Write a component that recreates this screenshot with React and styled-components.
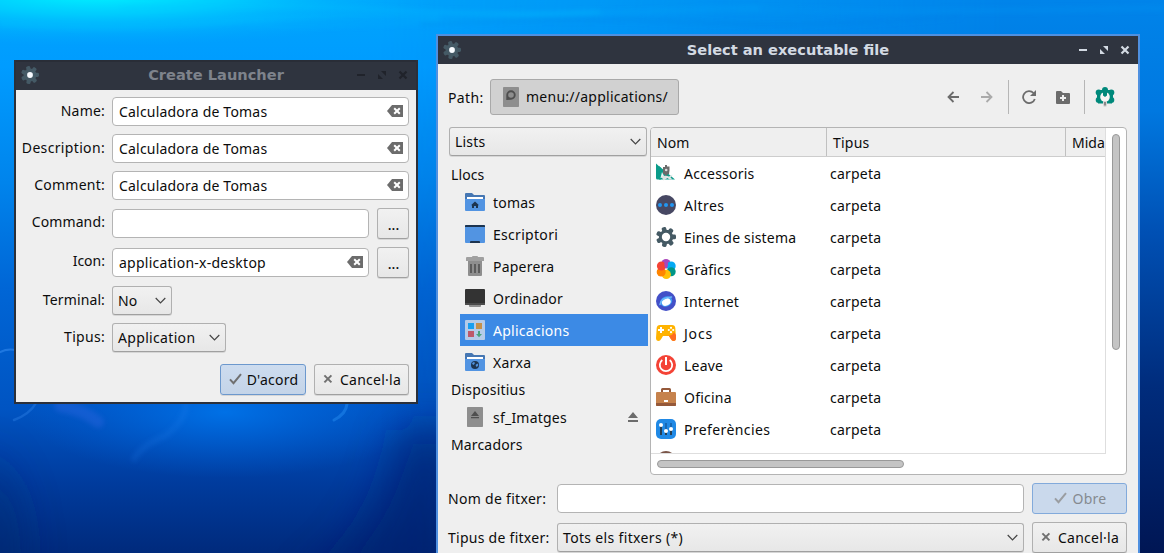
import React from "react";
import styled, { createGlobalStyle, css } from "styled-components";

const GlobalStyle = createGlobalStyle`
  *, *::before, *::after { box-sizing: border-box; }
  html, body { margin: 0; padding: 0; overflow: hidden; }
  body { font-family: "Noto Sans", "Open Sans", sans-serif; font-size: 14px; color: #0c0c0c; }
  svg { display: block; flex: none; }
  button, input { font: inherit; color: inherit; margin: 0; }
`;

/* ---------- desktop ---------- */

const Desktop = styled.main`
  position: relative;
  width: 1164px;
  height: 553px;
  overflow: hidden;
  background: #0058c4;
`;

const WallpaperSvg = styled.svg`
  position: absolute;
  inset: 0;
`;

const Wallpaper = () => (
  <WallpaperSvg width="1164" height="553" viewBox="0 0 1164 553">
    <defs>
      <linearGradient id="sea" x1="0" y1="0" x2="0" y2="1">
        <stop offset="0" stopColor="#00a4fc" />
        <stop offset="0.12" stopColor="#009cff" />
        <stop offset="0.33" stopColor="#0084ec" />
        <stop offset="0.52" stopColor="#0066d6" />
        <stop offset="0.74" stopColor="#0054c2" />
        <stop offset="0.87" stopColor="#003c9e" />
        <stop offset="1" stopColor="#002a7c" />
      </linearGradient>
      <radialGradient id="sun" cx="0.5" cy="0.5" r="0.5">
        <stop offset="0" stopColor="#00f4ff" />
        <stop offset="0.4" stopColor="#00dcff" stopOpacity="0.7" />
        <stop offset="1" stopColor="#00b0ff" stopOpacity="0" />
      </radialGradient>
      <radialGradient id="glow" cx="0.5" cy="0.5" r="0.5">
        <stop offset="0" stopColor="#0074ea" stopOpacity="0.9" />
        <stop offset="1" stopColor="#0060d8" stopOpacity="0" />
      </radialGradient>
      <linearGradient id="deepRight" x1="0" y1="0" x2="0" y2="1">
        <stop offset="0" stopColor="#0084ea" />
        <stop offset="0.2" stopColor="#0078e0" />
        <stop offset="0.42" stopColor="#0050b4" />
        <stop offset="0.7" stopColor="#002c7c" />
        <stop offset="1" stopColor="#001654" />
      </linearGradient>
      <linearGradient id="fadeRight" x1="0" y1="0" x2="1" y2="0">
        <stop offset="0" stopColor="#fff" stopOpacity="0" />
        <stop offset="0.8" stopColor="#fff" stopOpacity="1" />
      </linearGradient>
      <mask id="rightMask">
        <rect x="380" width="784" height="553" fill="url(#fadeRight)" />
      </mask>
      <filter id="soft" x="-30%" y="-100%" width="160%" height="300%">
        <feGaussianBlur stdDeviation="2.5" />
      </filter>
      <filter id="softer" x="-60%" y="-60%" width="220%" height="220%">
        <feGaussianBlur stdDeviation="20" />
      </filter>
    </defs>
    <rect width="1164" height="553" fill="url(#sea)" />
    <rect x="380" width="784" height="553" fill="url(#deepRight)" mask="url(#rightMask)" />
    <ellipse cx="95" cy="-6" rx="350" ry="52" fill="url(#sun)" />
    <ellipse cx="225" cy="412" rx="200" ry="66" fill="url(#glow)" />
    <g filter="url(#softer)">
      <path d="M400 430 H460 V590 H300 Q380 540 400 430Z" fill="#00226c" opacity="0.6" />
      <path d="M-20 450 Q30 490 20 590 H-20Z" fill="#00276c" opacity="0.5" />
    </g>
    <g fill="none" filter="url(#soft)">
      <path d="M0 24 Q120 32 230 22 T440 18" stroke="#00e4ff" strokeWidth="2" opacity="0.22" />
      <path d="M120 8 Q280 4 390 10 T600 12" stroke="#00c8ff" strokeWidth="3" opacity="0.4" />
      <path d="M250 26 Q330 28 460 20 T760 8" stroke="#18b4ff" strokeWidth="2" opacity="0.4" />
      <path d="M420 24 Q560 16 690 22 T960 16" stroke="#0078e0" strokeWidth="3" opacity="0.25" />
      <path d="M700 8 Q860 14 1164 8" stroke="#009cf4" strokeWidth="3" opacity="0.4" />
    </g>
    <g fill="none" strokeLinecap="round">
      <path d="M-3 354 Q5 348 16 350" stroke="#4aa0ff" strokeWidth="2" opacity="0.4" />
      <path d="M14 420 Q30 414 36 403" stroke="#4aa0ff" strokeWidth="2.5" opacity="0.25" />
      <path d="M347 404 Q346 414 334 420" stroke="#35a0ff" strokeWidth="3" opacity="0.35" />
      <path d="M186 404 Q186 420 165 436 Q142 445 134 459" stroke="#2a88f4" strokeWidth="6" opacity="0.18" filter="url(#soft)" />
      <path d="M60 406 Q84 410 98 422" stroke="#6878ff" strokeWidth="12" opacity="0.18" filter="url(#soft)" />
    </g>
  </WallpaperSvg>
);

/* ---------- window chrome ---------- */

const Window = styled.section`
  position: absolute;
  left: ${(p) => p.$x}px;
  top: ${(p) => p.$y}px;
  width: ${(p) => p.$w}px;
  height: ${(p) => p.$h}px;
  display: flex;
  flex-direction: column;
  background: #efefef;
  border: 2px solid ${(p) => (p.$active ? "#4f90e0" : "#2b303a")};
  ${(p) => !p.$active && css`border-top-width: 0;`}
`;

const TitleBar = styled.header`
  flex: none;
  display: grid;
  grid-template-columns: 60px 1fr 58px;
  align-items: center;
  height: ${(p) => (p.$active ? 28 : 30)}px;
  padding: 0 7px 0 5px;
  background: #2f343f;
  box-shadow: ${(p) => (p.$active ? "none" : "inset 0 2px #292d37")};
`;

const Title = styled.h1`
  margin: 0;
  text-align: center;
  white-space: nowrap;
  font: bold 14.6px/18px "DejaVu Sans", sans-serif;
  color: ${(p) => (p.$active ? "#d3dae3" : "#7e838c")};
`;

const WindowButtons = styled.div`
  display: flex;
  justify-content: flex-end;
  gap: 9px;
  color: ${(p) => (p.$active ? "#d3dae3" : "#20232b")};
`;

const WindowControls = ({ $active }) => (
  <WindowButtons $active={$active}>
    <svg width="12" height="12" viewBox="0 0 12 12"><path d="M2 6h8" stroke="currentColor" strokeWidth="2" /></svg>
    <svg width="12" height="12" viewBox="0 0 12 12"><path d="M5 2h5v5zM2 5v5h5z" fill="currentColor" /></svg>
    <svg width="12" height="12" viewBox="0 0 12 12"><path d="M2.500 2.500l7 7m0-7l-7 7" stroke="currentColor" strokeWidth="2.200" /></svg>
  </WindowButtons>
);

const Gear = ({ size = 20, color = "#455a64", hole = "#fff", r = 4.2 }) => (
  <svg width={size} height={size} viewBox="0 0 20 20">
    <g fill={color}>
      <circle cx="10" cy="10" r="7.2" />
      {[0, 1, 2, 3, 4, 5, 6].map((i) => (
        <rect key={i} x="7.7" y="0" width="4.600" height="6" rx="1.5" transform={`rotate(${-14 + (i * 360) / 7} 10 10)`} />
      ))}
    </g>
    <circle cx="10" cy="10" r={r} fill={hole} />
  </svg>
);

const AppGear = () => <Gear size={18} hole="#f8fbff" r={3.2} color="#455a66" />;

/* ---------- controls ---------- */

const raised = css`
  border: 1px solid #b0b0b0;
  border-bottom-color: #a0a0a0;
  border-radius: 3px;
  background: linear-gradient(#f1f1f1, #e7e7e7);
  box-shadow: 0 1px 0 rgba(0, 0, 0, 0.1);
`;

const Text = styled.span`
  display: block;
  white-space: nowrap;
  line-height: 20px;
  letter-spacing: ${(p) => p.$ls ?? 0.22}px;
`;

const FieldBox = styled.div`
  display: flex;
  align-items: center;
  justify-content: space-between;
  flex: ${(p) => (p.$w ? "none" : 1)};
  width: ${(p) => (p.$w ? `${p.$w}px` : "auto")};
  height: 29px;
  padding: 0 5px 0 6px;
  background: #fff;
  border: 1px solid #b4b4b4;
  border-radius: 4px;

  svg { margin-bottom: 1px; }
`;

const Select = styled.button`
  ${raised}
  display: flex;
  align-items: center;
  justify-content: space-between;
  flex: none;
  width: ${(p) => p.$w}px;
  height: 29px;
  padding: 0 5px;

  svg { margin-top: 1px; }
`;

const Button = styled.button`
  ${raised}
  display: flex;
  align-items: center;
  justify-content: center;
  gap: ${(p) => p.$gap || 5}px;
  flex: none;
  width: ${(p) => p.$w}px;
  height: 31px;
  padding: 0 0 0 1px;

  svg { margin-bottom: 1px; }

  ${(p) => p.$primary && css`
    background: linear-gradient(#cddcef, #c4d4e8);
    border-color: #6c98cd;
  `}
  ${(p) => p.$disabled && css`
    background: #cad9ec;
    border-color: #82aadb;
    box-shadow: none;
    color: #858a90;
  `}
`;

const Chevron = () => (
  <svg width="11" height="8" viewBox="0 0 11 8"><path d="M.7 1l4.800 4.800L10.300 1" fill="none" stroke="#444" strokeWidth="1.200" /></svg>
);

const ClearIcon = () => (
  <svg width="16" height="12" viewBox="0 0 16 12">
    <path d="M5 0H16V12H5L0 6Z" fill="#6c6c6c" />
    <path d="M7.200 3.200l5.600 5.600m0-5.600L7.200 8.800" stroke="#fff" strokeWidth="2" />
  </svg>
);

const CheckIcon = ({ color = "#707070" }) => (
  <svg width="13" height="12" viewBox="0 0 13 12"><path d="M1 6.400l3.500 3.800L12 1.200" fill="none" stroke={color} strokeWidth="2" /></svg>
);

const CrossIcon = () => (
  <svg width="10" height="10" viewBox="0 0 10 10"><path d="M1.400 1.400l7 7m0-7l-7 7" stroke="#707070" strokeWidth="2" /></svg>
);

/* ---------- launcher window ---------- */

const Form = styled.div`
  display: flex;
  flex-direction: column;
  gap: 8px;
  padding: 7px 7px 0 0;
`;

const FormRow = styled.div`
  display: flex;
  align-items: center;
  height: ${(p) => p.$h || 29}px;
`;

const FormLabel = styled(Text)`
  display: flex;
  justify-content: flex-end;
  width: 89px;
  margin-right: 7px;
  padding-bottom: ${(p) => p.$raise || 2}px;
`;

const Dots = styled(Button)`
  margin-left: 8px;
  padding-top: 1px;
  font-weight: 500;
`;

const FormActions = styled.div`
  display: flex;
  justify-content: flex-end;
  gap: 8px;
  padding-top: 4px;
`;

const textRows = [
  { label: "Name:", ls: 0.2 },
  { label: "Description:", ls: 0.34 },
  { label: "Comment:", ls: 0.25 },
];

const LauncherWindow = () => (
  <Window $x={14} $y={60} $w={404} $h={344}>
    <TitleBar>
      <AppGear />
      <Title>Create Launcher</Title>
      <WindowControls />
    </TitleBar>
    <Form>
      {textRows.map((row) => (
        <FormRow key={row.label}>
          <FormLabel $ls={row.ls}>{row.label}</FormLabel>
          <FieldBox><Text $ls={0.2}>Calculadora de Tomas</Text><ClearIcon /></FieldBox>
        </FormRow>
      ))}
      <FormRow $h={31}>
        <FormLabel $raise={4} $ls={0.12}>Command:</FormLabel>
        <FieldBox />
        <Dots $w={32}>...</Dots>
      </FormRow>
      <FormRow $h={31}>
        <FormLabel $raise={4} $ls={0}>Icon:</FormLabel>
        <FieldBox><Text $ls={0.24}>application-x-desktop</Text><ClearIcon /></FieldBox>
        <Dots $w={32}>...</Dots>
      </FormRow>
      <FormRow>
        <FormLabel $ls={0.12}>Terminal:</FormLabel>
        <Select $w={60}><Text $ls={0}>No</Text><Chevron /></Select>
      </FormRow>
      <FormRow>
        <FormLabel $ls={0.3}>Tipus:</FormLabel>
        <Select $w={114}><Text $ls={0.33}>Application</Text><Chevron /></Select>
      </FormRow>
      <FormActions>
        <Button $w={86} $primary><CheckIcon /><Text $ls={0.25}>D'acord</Text></Button>
        <Button $w={95} $gap={7}><CrossIcon /><Text $ls={0.25}>Cancel·la</Text></Button>
      </FormActions>
    </Form>
  </Window>
);

/* ---------- place icons ---------- */

const FolderIcon = ({ children }) => (
  <svg width="20" height="18" viewBox="0 0 20 18">
    <path d="M0 1Q0 0 1 0H7L9 2H19Q20 2 20 3V9H0Z" fill="#4677b3" />
    <rect x="2" y="4" width="16" height="4" fill="#fff" />
    <path d="M0 6H20V17Q20 18 19 18H1Q0 18 0 17Z" fill="#5294e2" />
    {children}
  </svg>
);

const HomeFolderIcon = () => (
  <FolderIcon><path d="M10 8.500l4 3.700h-1V15h-2v-2H9v2H7v-2.800H6z" fill="#1d344f" /></FolderIcon>
);

const NetworkFolderIcon = () => (
  <FolderIcon>
    <circle cx="10" cy="12" r="4" fill="#1d344f" />
    <path d="M7 10l2-1 1 1-1 1.500-1 .5zM10.500 12l2-1.400.9 1.400-1.600 2.200z" fill="#5294e2" />
  </FolderIcon>
);

const DesktopIcon = () => (
  <svg width="20" height="18" viewBox="0 0 20 18">
    <rect width="20" height="18" rx="1" fill="#5294e2" />
    <path d="M0 2V1Q0 0 1 0H19Q20 0 20 1V2ZM5 18V17Q5 16 6 16H14Q15 16 15 17V18Z" fill="#1d344f" />
  </svg>
);

const TrashIcon = () => (
  <svg width="20" height="20" viewBox="0 0 20 20">
    <path d="M3 5H17V19Q17 20 16 20H4Q3 20 3 19Z" fill="#8e8e8e" />
    <path d="M7 1Q7 0 8 0H12Q13 0 13 1H18Q19 1 19 2V5H1V2Q1 1 2 1Z" fill="#a0a0a0" />
    <path d="M6 8v9M10 8v9M14 8v9" stroke="#5c5c5c" strokeWidth="2" />
  </svg>
);

const ComputerIcon = () => (
  <svg width="20" height="18" viewBox="0 0 20 18">
    <rect width="20" height="16" rx="1" fill="#333" />
    <path d="M0 14H20V15Q20 16 19 16H1Q0 16 0 15Z" fill="#4b4b4b" />
    <path d="M4 16H16V17Q16 18 15 18H5Q4 18 4 17Z" fill="#8e8e8e" />
  </svg>
);

const AppsIcon = () => (
  <svg width="20" height="20" viewBox="0 0 20 20">
    <rect width="20" height="20" rx="1" fill="#b4cbe9" />
    <rect x="3" y="3" width="6" height="6" fill="#189ff0" />
    <rect x="11" y="3" width="6" height="6" fill="#c4914c" />
    <rect x="3" y="11" width="6" height="6" fill="#bd596a" />
    <path d="M13 11h2v3h2l-3 3.200-3-3.200h2z" fill="#4aa27c" />
  </svg>
);

const DriveIcon = ({ children }) => (
  <svg width="20" height="20" viewBox="0 0 20 20">
    <rect x="2" width="16" height="20" rx="0.8" fill="#8e8e8e" />
    {children}
  </svg>
);

const MountIcon = () => (
  <DriveIcon><path d="M10 4l4 5H6zM6 10h8v1.200H6z" fill="#4f4f4f" /></DriveIcon>
);

const PathDriveIcon = () => (
  <DriveIcon>
    <path d="M5.300 13V8a4.700 4.700 0 1 1 4.700 4.700Z" fill="#4f4f4f" />
    <circle cx="10" cy="8" r="2.8" fill="#8e8e8e" />
  </DriveIcon>
);

const EjectIcon = () => (
  <svg width="10" height="10" viewBox="0 0 10 10"><path d="M5 0l5 6H0zM0 8h10v2H0z" fill="#6c6c6c" /></svg>
);

/* ---------- category icons ---------- */

const AccessoriesIcon = () => (
  <svg width="20" height="20" viewBox="0 0 20 20">
    <path d="M0 .5L5 5V16.500H1.500Q0 16.500 0 15Z" fill="#0b9c8a" />
    <path d="M3 3L19 16.500H3Z" fill="#0b9c8a" />
    <path d="M4.500 15l1.500-6 2.500 5z" fill="#eef4f3" />
    <path d="M9 2h2v1.500h2.500V7.500L13 11h-1.500v1.500h-3V11H7V4h2z" fill="#6b6b6b" />
    <circle cx="10.2" cy="7" r="1.3" fill="#ddd" />
    <path d="M5 13.500q5-1.500 8 0l4-2-2.500 3 2 2h-3l-2-1.500-4 2.500-1-2z" fill="#dfe3e3" />
  </svg>
);

const OthersIcon = () => (
  <svg width="20" height="20" viewBox="0 0 20 20">
    <circle cx="10" cy="10" r="10" fill="#474863" />
    <g fill="#2196f3"><circle cx="4" cy="10" r="2" /><circle cx="10" cy="10" r="2" /><circle cx="16" cy="10" r="2" /></g>
  </svg>
);

const GraphicsIcon = () => (
  <svg width="20" height="20" viewBox="0 0 20 20">
    <circle cx="10" cy="4.6" r="4.6" fill="#ab47bc" />
    <circle cx="15.2" cy="7" r="4.5" fill="#03a9f4" />
    <circle cx="15.2" cy="12.8" r="4.5" fill="#009688" />
    <circle cx="10.3" cy="15.4" r="4.6" fill="#ffc107" />
    <circle cx="5.2" cy="13" r="4.5" fill="#ff8500" />
    <circle cx="5.4" cy="7" r="4.5" fill="#f44336" />
    <path d="M10 10Q6.500 5 10 1.500Q14 6 10 10Z" fill="#ab47bc" />
  </svg>
);

const InternetIcon = () => (
  <svg width="20" height="20" viewBox="0 0 20 20">
    <circle cx="10" cy="10" r="10" fill="#4350c8" />
    <ellipse cx="10" cy="10.500" rx="6.200" ry="5" fill="#3f9cf5" transform="rotate(-25 10 10)" />
    <ellipse cx="10.200" cy="11.200" rx="4.600" ry="3.400" fill="#fff" transform="rotate(-25 10 11)" />
    <path d="M4 13.500Q5 6.500 15.500 6" fill="none" stroke="#6cb8fa" strokeWidth="1.600" strokeLinecap="round" />
  </svg>
);

const GamesIcon = () => (
  <svg width="20" height="18" viewBox="0 0 20 18">
    <path d="M4 1H16Q19 1 19.300 4L20 14Q20 17 17.500 17Q16 17 14.500 14.500L13 12H7L5.500 14.500Q4 17 2.500 17Q0 17 0 14L.7 4Q1 1 4 1Z" fill="#ffb300" />
    <path d="M20 11V14Q20 17 17.500 17Q16 17 14.500 14.500L13 12H10Q17 12 18 8Z" fill="#ff6d22" />
    <path d="M5 3v6M2 6h6" stroke="#fff" strokeWidth="2" />
    <g fill="#fff"><circle cx="15" cy="3.800" r="1.100" /><circle cx="15" cy="8.200" r="1.100" /><circle cx="12.800" cy="6" r="1.100" /><circle cx="17.200" cy="6" r="1.100" /></g>
  </svg>
);

const LeaveIcon = () => (
  <svg width="20" height="20" viewBox="0 0 20 20">
    <circle cx="10" cy="10" r="10" fill="#f44336" />
    <path d="M6.300 5A6.200 6.200 0 1 0 13.700 5" fill="none" stroke="#fff" strokeWidth="1.800" />
    <path d="M10 2v8" stroke="#fff" strokeWidth="2" />
  </svg>
);

const OfficeIcon = () => (
  <svg width="20" height="20" viewBox="0 0 20 20">
    <path d="M6 5V2.500Q6 2 6.500 2H13.500Q14 2 14 2.500V5" fill="none" stroke="#95593a" strokeWidth="2" />
    <rect y="5" width="20" height="14" rx="1" fill="#c6824c" />
    <path d="M0 16H20V18Q20 19 19 19H1Q0 19 0 18Z" fill="#95593a" />
    <rect x="8" y="13" width="4" height="2" fill="#fff" />
  </svg>
);

const PreferencesIcon = () => (
  <svg width="20" height="20" viewBox="0 0 20 20">
    <rect width="20" height="20" rx="5" fill="#2089e5" />
    <path d="M5 6v10M10 12v4M15 10v6" stroke="#263f55" strokeWidth="2" />
    <path d="M10 4v7M15 4v5" stroke="#1768b5" strokeWidth="2" />
    <g fill="#fff"><circle cx="5" cy="6" r="2" /><circle cx="10" cy="12" r="2" /><circle cx="15" cy="10" r="2" /></g>
  </svg>
);

const BrownIcon = () => (
  <svg width="20" height="20" viewBox="0 0 20 20"><circle cx="10" cy="10" r="10" fill="#7a5548" /></svg>
);

/* ---------- file dialog ---------- */

const DialogBody = styled.div`
  display: flex;
  flex-direction: column;
  padding: 15px 11px 0 10px;
`;

const PathRow = styled.div`
  display: flex;
  align-items: center;
  height: 36px;
`;

const PathLabel = styled(Text)`
  width: 42px;
  padding-top: 1px;
`;

const PathButton = styled.button`
  display: flex;
  align-items: center;
  gap: 5px;
  flex: none;
  width: 189px;
  height: 36px;
  padding: 0 0 0 10px;
  background: #d1d1d1;
  border: 1px solid #a9a9a9;
  border-radius: 3px;
`;

const Toolbar = styled.div`
  display: flex;
  align-items: center;
  padding-left: 268px;
`;

const Tool = styled.div`
  flex: none;
  margin-left: ${(p) => p.$before || 0}px;
`;

const Separator = styled.div`
  flex: none;
  width: 1px;
  height: 34px;
  margin-left: ${(p) => p.$before}px;
  background: #b6b6b6;
`;

const Panes = styled.div`
  display: flex;
  gap: 2px;
  height: 348px;
  margin-top: 12px;
`;

const Sidebar = styled.nav`
  display: flex;
  flex-direction: column;
  width: 200px;
  padding-left: 1px;
`;

const PlaceList = styled.div`
  display: flex;
  flex-direction: column;
  padding-top: 7px;
`;

const PlaceHeader = styled(Text)`
  height: 23px;
  line-height: 23px;
  padding-left: 2px;
`;

const PlaceRow = styled.div`
  display: flex;
  align-items: center;
  gap: 8px;
  height: 32px;
  margin-left: 11px;
  padding: 0 10px 0 5px;
  color: ${(p) => (p.$selected ? "#fff" : "inherit")};
  background: ${(p) => (p.$selected ? "#3c8ae5" : "transparent")};
`;

const PlaceName = styled(Text)`
  flex: 1;
  padding-top: 2px;
`;

const FileView = styled.div`
  display: flex;
  flex-direction: column;
  width: 477px;
  background: #fff;
  border: 1px solid #b4b4b4;
  border-radius: 4px;
  overflow: hidden;
`;

const ViewMain = styled.div`
  display: flex;
  height: 326px;
`;

const Viewport = styled.div`
  width: 455px;
  overflow: hidden;
  border-right: 1px solid #dedede;
  border-bottom: 1px solid #dedede;
`;

const HeaderRow = styled.div`
  display: flex;
  width: 540px;
  height: 29px;
  background: #efefef;
  border-bottom: 1px solid #cdcdcd;
`;

const HeaderCell = styled.div`
  display: flex;
  align-items: center;
  width: ${(p) => p.$w}px;
  padding: 2px 0 0 6px;
  border-right: 1px solid #c0c0c0;
`;

const FileRow = styled.div`
  display: flex;
  align-items: center;
  height: 32px;
  padding-left: 5px;
`;

const FileIcon = styled.div`
  width: 20px;
  margin-right: 8px;
`;

const FileCell = styled(Text)`
  width: ${(p) => p.$w}px;
  padding-top: 2px;
`;

const VScroll = styled.div`
  width: 8px;
  height: 216px;
  margin: 6px 0 0 6px;
  background: #c4c4c4;
  border: 1px solid #999;
  border-radius: 4px;
`;

const HScroll = styled.div`
  width: 247px;
  height: 8px;
  margin: 6px 0 0 6px;
  background: #c4c4c4;
  border: 1px solid #999;
  border-radius: 4px;
`;

const BottomRow = styled.div`
  display: flex;
  align-items: center;
  gap: 8px;
  height: 31px;
  margin-top: 8px;
`;

const BottomLabel = styled(Text)`
  width: 101px;
`;

const places = [
  { name: "tomas", Icon: HomeFolderIcon },
  { name: "Escriptori", Icon: DesktopIcon, ls: 0.3 },
  { name: "Paperera", Icon: TrashIcon },
  { name: "Ordinador", Icon: ComputerIcon },
  { name: "Aplicacions", Icon: AppsIcon, selected: true, ls: 0.27 },
  { name: "Xarxa", Icon: NetworkFolderIcon },
];

const files = [
  { name: "Accessoris", Icon: AccessoriesIcon },
  { name: "Altres", Icon: OthersIcon, ls: 0.45 },
  { name: "Eines de sistema", Icon: Gear, ls: 0.18 },
  { name: "Gràfics", Icon: GraphicsIcon },
  { name: "Internet", Icon: InternetIcon, ls: 0.15 },
  { name: "Jocs", Icon: GamesIcon, ls: 0.8 },
  { name: "Leave", Icon: LeaveIcon },
  { name: "Oficina", Icon: OfficeIcon },
  { name: "Preferències", Icon: PreferencesIcon, ls: 0.4 },
];

const BackIcon = () => (
  <svg width="12" height="12" viewBox="0 0 12 12"><path d="M12 6H1.500M6.500 1L1.500 6l5 5" fill="none" stroke="#6c6c6c" strokeWidth="1.800" /></svg>
);

const ForwardIcon = () => (
  <svg width="12" height="12" viewBox="0 0 12 12"><path d="M0 6h10.500M5.500 1l5 5-5 5" fill="none" stroke="#aaa" strokeWidth="1.800" /></svg>
);

const ReloadIcon = () => (
  <svg width="14" height="14" viewBox="0 0 14 14">
    <path d="M12.800 9A6 6 0 1 1 11.500 3" fill="none" stroke="#6c6c6c" strokeWidth="1.800" />
    <path d="M14 0v6H8z" fill="#6c6c6c" />
  </svg>
);

const NewFolderIcon = () => (
  <svg width="14" height="13" viewBox="0 0 14 13">
    <path d="M0 1Q0 0 1 0H5L7 2H13Q14 2 14 3V12Q14 13 13 13H1Q0 13 0 12Z" fill="#6c6c6c" />
    <path d="M7 4v6M4 7h6" stroke="#efefef" strokeWidth="2" />
  </svg>
);

const ConfigureIcon = () => (
  <svg width="20" height="20" viewBox="0 0 20 20">
    <g fill="#00897b">
      <path d="M3 3H17V16.500H3Z" />
      <circle cx="10" cy="3" r="3" />
      <circle cx="3.700" cy="5.600" r="3" />
      <circle cx="16.300" cy="5.600" r="3" />
      <circle cx="3.700" cy="13" r="3" />
      <circle cx="16.300" cy="13" r="3" />
      <path d="M2 6H18V13H2Z" />
    </g>
    <circle cx="10" cy="10" r="4.800" fill="#f6f6f6" />
    <path d="M8 3h4v5.500l-2 1.500-2-1.500z" fill="#00897b" />
    <path d="M8 14h4v4q0 2-2 2t-2-2z" fill="#d6d6d6" />
    <path d="M10 15v3.500" stroke="#777" strokeWidth="1.600" />
  </svg>
);

const FileDialog = () => (
  <Window $x={436} $y={34} $w={704} $h={540} $active>
    <TitleBar $active>
      <AppGear />
      <Title $active>Select an executable file</Title>
      <WindowControls $active />
    </TitleBar>
    <DialogBody>
      <PathRow>
        <PathLabel $ls={0.35}>Path:</PathLabel>
        <PathButton><PathDriveIcon /><Text $ls={0.25}>menu://applications/</Text></PathButton>
        <Toolbar>
          <Tool><BackIcon /></Tool>
          <Tool $before={22}><ForwardIcon /></Tool>
          <Separator $before={15} />
          <Tool $before={13}><ReloadIcon /></Tool>
          <Tool $before={20}><NewFolderIcon /></Tool>
          <Separator $before={14} />
          <Tool $before={10}><ConfigureIcon /></Tool>
        </Toolbar>
      </PathRow>
      <Panes>
        <Sidebar>
          <Select $w={198}><Text $ls={0.2}>Lists</Text><Chevron /></Select>
          <PlaceList>
            <PlaceHeader $ls={0.1}>Llocs</PlaceHeader>
            {places.map(({ name, Icon, selected, ls }) => (
              <PlaceRow key={name} $selected={selected}>
                <Icon />
                <PlaceName $ls={ls}>{name}</PlaceName>
              </PlaceRow>
            ))}
            <PlaceHeader>Dispositius</PlaceHeader>
            <PlaceRow>
              <MountIcon />
              <PlaceName>sf_Imatges</PlaceName>
              <EjectIcon />
            </PlaceRow>
            <PlaceHeader $ls={0.15}>Marcadors</PlaceHeader>
          </PlaceList>
        </Sidebar>
        <FileView>
          <ViewMain>
            <Viewport>
              <HeaderRow>
                <HeaderCell $w={176}><Text $ls={0.1}>Nom</Text></HeaderCell>
                <HeaderCell $w={239}><Text>Tipus</Text></HeaderCell>
                <HeaderCell $w={120}><Text $ls={0}>Mida</Text></HeaderCell>
              </HeaderRow>
              {files.map(({ name, Icon, ls }) => (
                <FileRow key={name}>
                  <FileIcon><Icon /></FileIcon>
                  <FileCell $w={146} $ls={ls}>{name}</FileCell>
                  <FileCell $w={200}>carpeta</FileCell>
                </FileRow>
              ))}
              <FileRow><FileIcon><BrownIcon /></FileIcon></FileRow>
            </Viewport>
            <VScroll />
          </ViewMain>
          <HScroll />
        </FileView>
      </Panes>
      <BottomRow>
        <BottomLabel $ls={0.3}>Nom de fitxer:</BottomLabel>
        <FieldBox $w={467} />
        <Button $w={95} $gap={6} $disabled><CheckIcon color="#9a9da1" /><Text>Obre</Text></Button>
      </BottomRow>
      <BottomRow>
        <BottomLabel $ls={0.27}>Tipus de fitxer:</BottomLabel>
        <Select $w={467}><Text $ls={0.34}>Tots els fitxers (*)</Text><Chevron /></Select>
        <Button $w={95} $gap={7}><CrossIcon /><Text $ls={0.25}>Cancel·la</Text></Button>
      </BottomRow>
    </DialogBody>
  </Window>
);

export default function App() {
  return (
    <>
      <GlobalStyle />
      <Desktop>
        <Wallpaper />
        <LauncherWindow />
        <FileDialog />
      </Desktop>
    </>
  );
}
